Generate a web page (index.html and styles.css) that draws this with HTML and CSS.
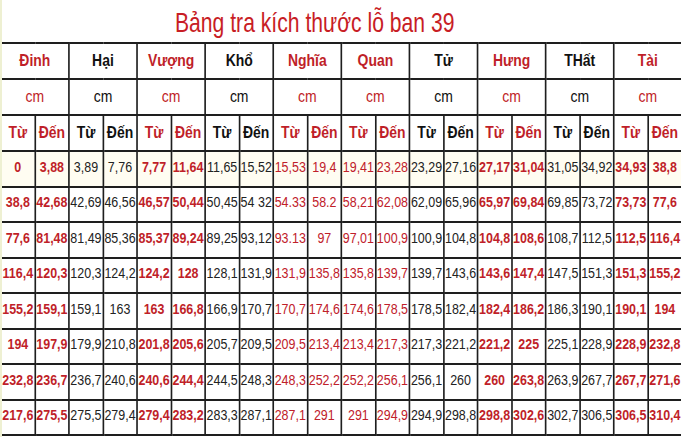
FILE: index.html
```html
<!DOCTYPE html>
<html lang="vi">
<head>
<meta charset="utf-8">
<link rel="stylesheet" href="styles.css">
</head>
<body>
<div class="page">
  <div class="title-bar"><h1 class="title">Bảng tra kích thước lỗ ban 39</h1></div>
  <table class="grid">
    <colgroup>
      <col><col><col><col><col><col><col><col><col><col>
      <col><col><col><col><col><col><col><col><col><col>
    </colgroup>
    <tr class="head">
      <th colspan="2" class="r">Đinh</th><th colspan="2">Hại</th><th colspan="2" class="r">Vượng</th><th colspan="2">Khổ</th><th colspan="2" class="r">Nghĩa</th>
      <th colspan="2" class="r">Quan</th><th colspan="2">Tử</th><th colspan="2" class="r">Hưng</th><th colspan="2">THất</th><th colspan="2" class="r">Tài</th>
    </tr>
    <tr class="head unit">
      <th colspan="2" class="r">cm</th><th colspan="2">cm</th><th colspan="2" class="r">cm</th><th colspan="2">cm</th><th colspan="2" class="r">cm</th>
      <th colspan="2" class="r">cm</th><th colspan="2">cm</th><th colspan="2" class="r">cm</th><th colspan="2">cm</th><th colspan="2" class="r">cm</th>
    </tr>
    <tr class="head sub">
      <th class="r">Từ</th><th class="r">Đến</th><th>Từ</th><th>Đến</th><th class="r">Từ</th><th class="r">Đến</th><th>Từ</th><th>Đến</th><th class="r">Từ</th><th class="r">Đến</th>
      <th class="r">Từ</th><th class="r">Đến</th><th>Từ</th><th>Đến</th><th class="r">Từ</th><th class="r">Đến</th><th>Từ</th><th>Đến</th><th class="r">Từ</th><th class="r">Đến</th>
    </tr>
    <tr class="first">
      <td class="r">0</td><td class="r">3,88</td><td>3,89</td><td>7,76</td><td class="r">7,77</td><td class="r">11,64</td><td>11,65</td><td>15,52</td><td class="rn">15,53</td><td class="rn">19,4</td>
      <td class="rn">19,41</td><td class="rn">23,28</td><td>23,29</td><td>27,16</td><td class="r">27,17</td><td class="r">31,04</td><td>31,05</td><td>34,92</td><td class="r">34,93</td><td class="r">38,8</td>
    </tr>
    <tr>
      <td class="r">38,8</td><td class="r">42,68</td><td>42,69</td><td>46,56</td><td class="r">46,57</td><td class="r">50,44</td><td>50,45</td><td>54 32</td><td class="rn">54.33</td><td class="rn">58.2</td>
      <td class="rn">58,21</td><td class="rn">62,08</td><td>62,09</td><td>65,96</td><td class="r">65,97</td><td class="r">69,84</td><td>69,85</td><td>73,72</td><td class="r">73,73</td><td class="r">77,6</td>
    </tr>
    <tr>
      <td class="r">77,6</td><td class="r">81,48</td><td>81,49</td><td>85,36</td><td class="r">85,37</td><td class="r">89,24</td><td>89,25</td><td>93,12</td><td class="rn">93.13</td><td class="rn">97</td>
      <td class="rn">97,01</td><td class="rn">100,9</td><td>100,9</td><td>104,8</td><td class="r">104,8</td><td class="r">108,6</td><td>108,7</td><td>112,5</td><td class="r">112,5</td><td class="r">116,4</td>
    </tr>
    <tr>
      <td class="r">116,4</td><td class="r">120,3</td><td>120,3</td><td>124,2</td><td class="r">124,2</td><td class="r">128</td><td>128,1</td><td>131,9</td><td class="rn">131,9</td><td class="rn">135,8</td>
      <td class="rn">135,8</td><td class="rn">139,7</td><td>139,7</td><td>143,6</td><td class="r">143,6</td><td class="r">147,4</td><td>147,5</td><td>151,3</td><td class="r">151,3</td><td class="r">155,2</td>
    </tr>
    <tr>
      <td class="r">155,2</td><td class="r">159,1</td><td>159,1</td><td>163</td><td class="r">163</td><td class="r">166,8</td><td>166,9</td><td>170,7</td><td class="rn">170,7</td><td class="rn">174,6</td>
      <td class="rn">174,6</td><td class="rn">178,5</td><td>178,5</td><td>182,4</td><td class="r">182,4</td><td class="r">186,2</td><td>186,3</td><td>190,1</td><td class="r">190,1</td><td class="r">194</td>
    </tr>
    <tr>
      <td class="r">194</td><td class="r">197,9</td><td>179,9</td><td>210,8</td><td class="r">201,8</td><td class="r">205,6</td><td>205,7</td><td>209,5</td><td class="rn">209,5</td><td class="rn">213,4</td>
      <td class="rn">213,4</td><td class="rn">217,3</td><td>217,3</td><td>221,2</td><td class="r">221,2</td><td class="r">225</td><td>225,1</td><td>228,9</td><td class="r">228,9</td><td class="r">232,8</td>
    </tr>
    <tr>
      <td class="r">232,8</td><td class="r">236,7</td><td>236,7</td><td>240,6</td><td class="r">240,6</td><td class="r">244,4</td><td>244,5</td><td>248,3</td><td class="rn">248,3</td><td class="rn">252,2</td>
      <td class="rn">252,2</td><td class="rn">256,1</td><td>256,1</td><td>260</td><td class="r">260</td><td class="r">263,8</td><td>263,9</td><td>267,7</td><td class="r">267,7</td><td class="r">271,6</td>
    </tr>
    <tr>
      <td class="r">217,6</td><td class="r">275,5</td><td>275,5</td><td>279,4</td><td class="r">279,4</td><td class="r">283,2</td><td>283,3</td><td>287,1</td><td class="rn">287,1</td><td class="rn">291</td>
      <td class="rn">291</td><td class="rn">294,9</td><td>294,9</td><td>298,8</td><td class="r">298,8</td><td class="r">302,6</td><td>302,7</td><td>306,5</td><td class="r">306,5</td><td class="r">310,4</td>
    </tr>
  </table>
</div>
</body>
</html>
```

FILE: styles.css
```css
html, body {
  margin: 0;
  padding: 0;
  background: #ffffff;
}

.page {
  width: 681px;
  height: 437px;
  overflow: hidden;
  font-family: "Liberation Sans", Arial, sans-serif;
  color: #1a1a1a;
  border-left: 2px solid #eef0d2;
  box-sizing: border-box;
}

.title-bar {
  height: 42px;
  padding-left: 173px;
  box-sizing: border-box;
}

.title {
  display: inline-block;
  margin: 8px 0 0 0;
  font-size: 28px;
  font-weight: normal;
  line-height: 30px;
  color: #c81d25;
  white-space: nowrap;
  transform: scaleX(0.755);
  transform-origin: left center;
}

.grid {
  width: 830px;
  margin-left: -2px;
  border-collapse: collapse;
  table-layout: fixed;
  transform: scaleX(0.8205);
  transform-origin: left top;
}

.grid col {
  width: 41.5px;
}

.grid th,
.grid td {
  border: 2px solid #1e1e1e;
  padding: 0;
  text-align: center;
  white-space: nowrap;
}

.grid th {
  height: 34px;
  font-size: 17px;
  font-weight: bold;
  color: #111;
}

.grid .unit th {
  font-size: 17px;
  font-weight: normal;
}

.grid td {
  height: 28.5px;
  padding-bottom: 5px;
  font-size: 15.2px;
  color: #222;
}

.grid .r {
  color: #bf1f29;
  font-weight: bold;
}

.grid td.rn {
  color: #c0202a;
  font-weight: normal;
}

.grid .unit th.r {
  font-weight: normal;
}

.grid tr.first td {
  background: #fffdf2;
}
```
